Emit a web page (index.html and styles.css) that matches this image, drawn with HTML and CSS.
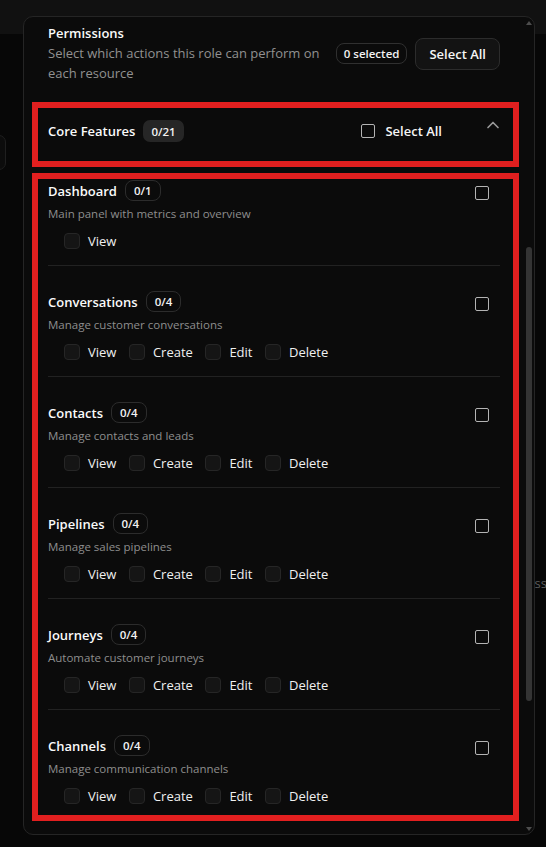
FILE: index.html
```html
<!DOCTYPE html>
<html lang="en">
<head>
<meta charset="utf-8">
<title>Permissions</title>
<link rel="stylesheet" href="styles.css">
</head>
<body>
<div class="app">
  <header class="app-bar"></header>
  <main class="app-body">
    <div class="ghost-card"></div>
    <div class="ghost-row"><span class="ghost-text">Access</span></div>
  </main>
</div>

<div class="dialog">
  <div class="dialog-head">
    <div class="head-text">
      <div class="head-title">Permissions</div>
      <p class="head-desc">Select which actions this role can perform on each resource</p>
    </div>
    <div class="head-actions">
      <span class="pill">0 selected</span>
      <button class="btn">Select All</button>
    </div>
  </div>

  <section class="group">
    <div class="group-head">
      <div class="group-title-row">
        <span class="group-title">Core Features</span>
        <span class="count-fill">0/21</span>
      </div>
      <div class="group-tools">
        <span class="check-outline"></span>
        <span class="tool-label">Select All</span>
      </div>
      <button class="chevron" aria-label="Collapse">
        <svg width="20" height="20" viewBox="0 0 24 24" fill="none" stroke="#9a9a9a" stroke-width="2" stroke-linecap="round" stroke-linejoin="round"><path d="m18 15-6-6-6 6"/></svg>
      </button>
    </div>

    <div class="group-body">
      <div class="item first">
        <div class="item-main">
          <div class="item-title-row"><span class="item-title">Dashboard</span><span class="count">0/1</span></div>
          <div class="item-desc">Main panel with metrics and overview</div>
          <div class="perm-row">
            <span class="perm"><span class="box"></span>View</span>
          </div>
        </div>
        <span class="check-outline item-check"></span>
      </div>

      <div class="item">
        <div class="item-main">
          <div class="item-title-row"><span class="item-title">Conversations</span><span class="count">0/4</span></div>
          <div class="item-desc">Manage customer conversations</div>
          <div class="perm-row">
            <span class="perm"><span class="box"></span>View</span>
            <span class="perm"><span class="box"></span>Create</span>
            <span class="perm"><span class="box"></span>Edit</span>
            <span class="perm"><span class="box"></span>Delete</span>
          </div>
        </div>
        <span class="check-outline item-check"></span>
      </div>

      <div class="item">
        <div class="item-main">
          <div class="item-title-row"><span class="item-title">Contacts</span><span class="count">0/4</span></div>
          <div class="item-desc">Manage contacts and leads</div>
          <div class="perm-row">
            <span class="perm"><span class="box"></span>View</span>
            <span class="perm"><span class="box"></span>Create</span>
            <span class="perm"><span class="box"></span>Edit</span>
            <span class="perm"><span class="box"></span>Delete</span>
          </div>
        </div>
        <span class="check-outline item-check"></span>
      </div>

      <div class="item">
        <div class="item-main">
          <div class="item-title-row"><span class="item-title">Pipelines</span><span class="count">0/4</span></div>
          <div class="item-desc">Manage sales pipelines</div>
          <div class="perm-row">
            <span class="perm"><span class="box"></span>View</span>
            <span class="perm"><span class="box"></span>Create</span>
            <span class="perm"><span class="box"></span>Edit</span>
            <span class="perm"><span class="box"></span>Delete</span>
          </div>
        </div>
        <span class="check-outline item-check"></span>
      </div>

      <div class="item">
        <div class="item-main">
          <div class="item-title-row"><span class="item-title">Journeys</span><span class="count">0/4</span></div>
          <div class="item-desc">Automate customer journeys</div>
          <div class="perm-row">
            <span class="perm"><span class="box"></span>View</span>
            <span class="perm"><span class="box"></span>Create</span>
            <span class="perm"><span class="box"></span>Edit</span>
            <span class="perm"><span class="box"></span>Delete</span>
          </div>
        </div>
        <span class="check-outline item-check"></span>
      </div>

      <div class="item">
        <div class="item-main">
          <div class="item-title-row"><span class="item-title">Channels</span><span class="count">0/4</span></div>
          <div class="item-desc">Manage communication channels</div>
          <div class="perm-row">
            <span class="perm"><span class="box"></span>View</span>
            <span class="perm"><span class="box"></span>Create</span>
            <span class="perm"><span class="box"></span>Edit</span>
            <span class="perm"><span class="box"></span>Delete</span>
          </div>
        </div>
        <span class="check-outline item-check"></span>
      </div>
    </div>
  </section>

  <div class="scrollbar">
    <span class="arrow-up"></span>
    <span class="thumb"></span>
    <span class="arrow-down"></span>
  </div>
</div>
</body>
</html>
```

FILE: styles.css
```css
* { box-sizing: border-box; }

html, body {
  margin: 0;
  padding: 0;
}

body {
  width: 546px;
  height: 847px;
  overflow: hidden;
  position: relative;
  background: #070707;
  font-family: "Open Sans", "Noto Sans", "DejaVu Sans", sans-serif;
  color: #f5f5f5;
}

/* background application (dimmed behind the dialog) */
.app-bar {
  height: 34px;
  background: #111111;
}

.app-body {
  padding-top: 101px;
}

.ghost-card {
  width: 26px;
  height: 35px;
  margin-left: -20px;
  border: 1px solid #1f1f1f;
  border-radius: 7px;
  background: #0c0c0c;
}

.ghost-row {
  display: flex;
  justify-content: flex-end;
  margin-top: 404px;
  margin-right: -1px;
  height: 18px;
  line-height: 18px;
}

.ghost-text {
  font-size: 13px;
  color: #5c5c5c;
}

/* dialog */
.dialog {
  position: absolute;
  top: 16px;
  left: 23px;
  width: 512px;
  height: 819px;
  background: #0b0b0b;
  border: 1px solid #252525;
  border-radius: 10px;
  overflow: hidden;
}

.dialog-head {
  display: flex;
  align-items: center;
  padding: 7px 34px 0 24px;
  margin-bottom: 19px;
}

.head-text {
  flex: 1;
  min-width: 0;
}

.head-title {
  font-size: 13px;
  font-weight: 600;
  line-height: 18px;
  color: #fafafa;
}

.head-desc {
  margin: 1px 0 0;
  max-width: 282px;
  font-size: 13px;
  line-height: 20px;
  color: #919191;
}

.head-actions {
  display: flex;
  align-items: center;
  gap: 8px;
  flex-shrink: 0;
}

.pill {
  display: inline-flex;
  align-items: center;
  height: 21px;
  padding: 0 7px;
  border: 1px solid #303030;
  border-radius: 8px;
  font-size: 11.5px;
  font-weight: 600;
  color: #f2f2f2;
}

.btn {
  height: 32px;
  padding: 0 13px;
  border: 1px solid #2c2c2c;
  border-radius: 8px;
  background: #131313;
  font-family: inherit;
  font-size: 13px;
  font-weight: 600;
  color: #f5f5f5;
}

/* group card */
.group {
  margin: 0 15px 0 8px;
}

.group-head {
  display: flex;
  align-items: flex-start;
  height: 65px;
  padding: 12px 10px 0 10px;
  border: 6px solid #e21f1f;
}

.group-title-row {
  display: flex;
  align-items: center;
  gap: 8px;
  height: 22px;
}

.group-title {
  font-size: 13px;
  font-weight: 600;
  color: #fafafa;
}

.count-fill {
  display: inline-flex;
  align-items: center;
  height: 22px;
  padding: 0 8px;
  border-radius: 7px;
  background: #262626;
  font-size: 11.5px;
  font-weight: 600;
  color: #f2f2f2;
}

.group-tools {
  display: flex;
  align-items: center;
  gap: 10px;
  height: 22px;
  margin-left: auto;
}

.tool-label {
  font-size: 13px;
  font-weight: 600;
  color: #f5f5f5;
}

.check-outline {
  display: inline-block;
  width: 14px;
  height: 14px;
  border: 1.5px solid #b4b4b4;
  border-radius: 2px;
  flex-shrink: 0;
}

.chevron {
  display: flex;
  align-items: center;
  justify-content: center;
  width: 20px;
  height: 20px;
  margin: -5px 0 0 41px;
  padding: 0;
  border: 0;
  background: transparent;
}

.group-body {
  height: 648px;
  margin-top: 6px;
  padding: 0 13px 0 10px;
  border: 6px solid #e21f1f;
  overflow: hidden;
}

.item {
  display: flex;
  align-items: flex-start;
  padding: 25px 0 14px;
  border-bottom: 1px solid #222222;
}

.item.first {
  padding-top: 1px;
}

.item-main {
  flex: 1;
  min-width: 0;
}

.item-title-row {
  display: flex;
  align-items: center;
  gap: 8px;
  height: 21px;
}

.item-title {
  font-size: 13px;
  font-weight: 600;
  color: #fafafa;
}

.count {
  display: inline-flex;
  align-items: center;
  height: 21px;
  padding: 0 8px;
  border: 1px solid #2c2c2c;
  border-radius: 8px;
  font-size: 11.5px;
  font-weight: 600;
  color: #f2f2f2;
}

.item-desc {
  margin-top: 5px;
  font-size: 11.5px;
  line-height: 16px;
  color: #8e8e8e;
}

.perm-row {
  display: flex;
  align-items: center;
  gap: 12.5px;
  height: 20px;
  margin-top: 9px;
  padding-left: 16px;
}

.perm {
  display: inline-flex;
  align-items: center;
  gap: 8px;
  font-size: 13px;
  color: #f0f0f0;
}

.box {
  display: inline-block;
  width: 16px;
  height: 16px;
  border: 1px solid #262626;
  border-radius: 4px;
  background: #151515;
}

.item-check {
  margin: 6px 11px 0 0;
}

/* scrollbar (drawn over the dialog's right edge) */
.scrollbar {
  position: absolute;
  top: 0;
  right: 0;
  bottom: 0;
  width: 11px;
}

.thumb {
  position: absolute;
  top: 230px;
  right: 2px;
  width: 6.5px;
  height: 454px;
  border-radius: 4px;
  background: #343434;
}

.arrow-up,
.arrow-down {
  position: absolute;
  right: 2px;
  width: 0;
  height: 0;
  border-left: 3.5px solid transparent;
  border-right: 3.5px solid transparent;
}

.arrow-up {
  top: 4px;
  border-bottom: 4px solid #4d4d4d;
}

.arrow-down {
  bottom: 3px;
  border-top: 4px solid #4d4d4d;
}
```
